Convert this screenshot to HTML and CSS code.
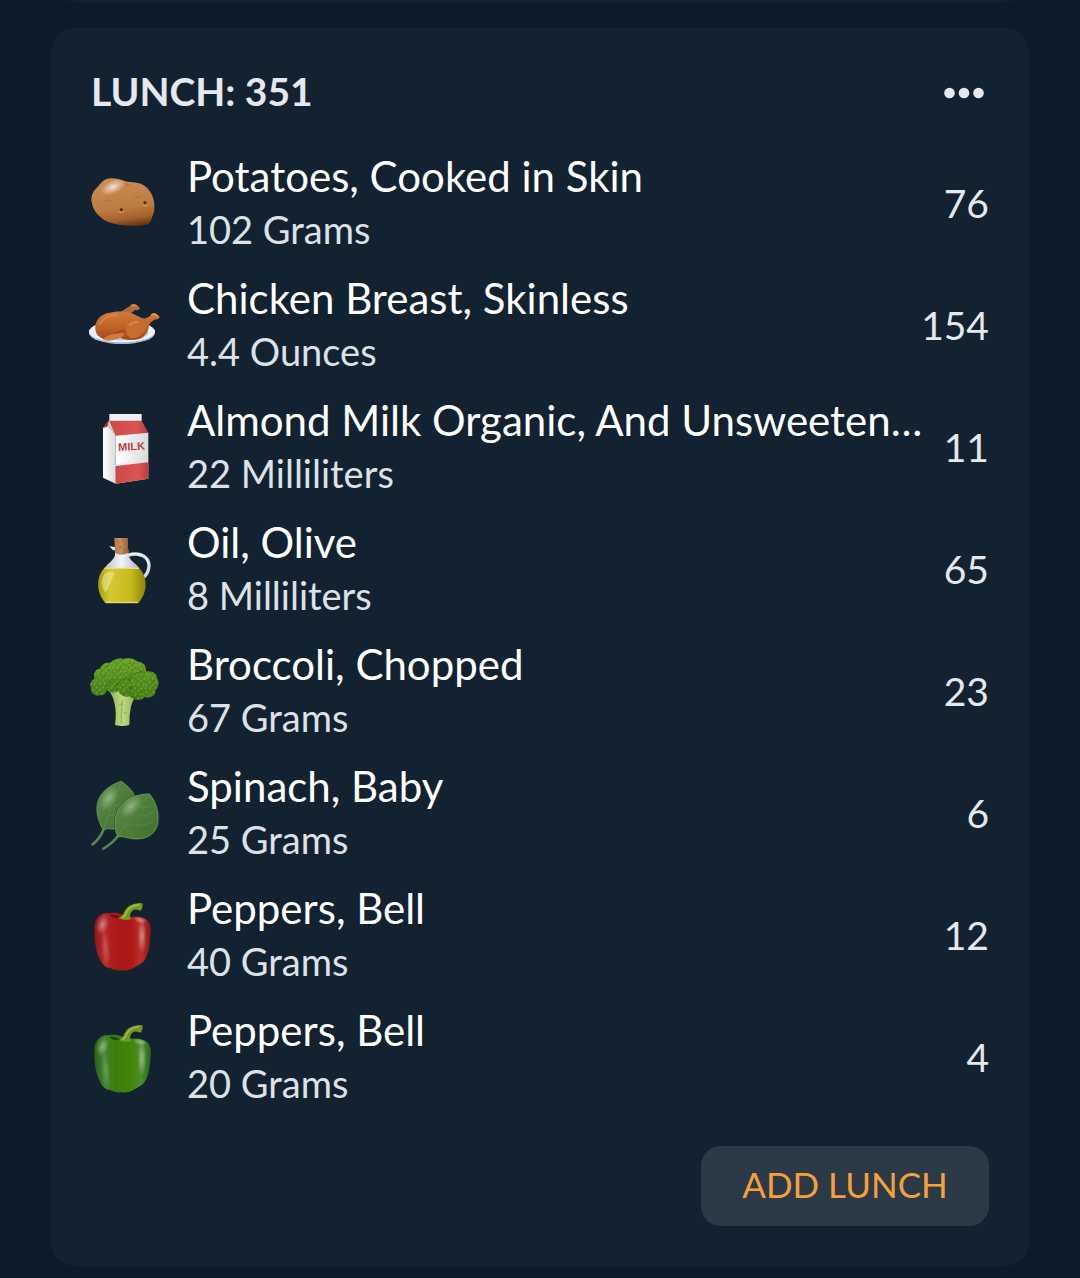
FILE: index.html
```
<!DOCTYPE html>
<html lang="en">
<head>
  <meta charset="UTF-8">
  <meta name="viewport" content="width=device-width, initial-scale=1">
  <title>Lunch</title>
  <link rel="stylesheet" href="styles.css">
</head>
<body>

  <main class="day">
    <div class="card card-prev"></div>

    <section class="card">
      <header class="meal-header">
        <h2>LUNCH: 351</h2>
        <button class="more-btn" type="button" aria-label="More options">
          <svg viewBox="0 0 40 12"><circle cx="5.5" cy="6" r="5.3"/><circle cx="20" cy="6" r="5.3"/><circle cx="34.5" cy="6" r="5.3"/></svg>
        </button>
      </header>

      <ul class="foods">
        <li class="food">
          <!-- Potato -->
          <svg class="icon" viewBox="33 6 216 216">
            <defs>
              <linearGradient id="potato" x1="0.4" y1="0" x2="0.6" y2="1"><stop offset="0" stop-color="#c98d55"/><stop offset="0.6" stop-color="#bd7d43"/><stop offset="0.85" stop-color="#a3622b"/><stop offset="1" stop-color="#6b3a14"/></linearGradient>
              <radialGradient id="shine"><stop offset="0" stop-color="#fff" stop-opacity="0.75"/><stop offset="1" stop-color="#fff" stop-opacity="0"/></radialGradient>
            </defs>
            <path d="M96 40C74 39 64 52 53 66C37 79 31 96 36 115C39 136 55 153 72 165C95 177 117 180 145 182C170 183 192 182 205 177C214 171 215 158 220 147C226 130 223 108 217 92C209 74 197 62 178 55C160 50 146 52 132 47C119 43 109 40 96 40Z" fill="url(#potato)"/>
            <ellipse cx="99" cy="66" rx="40" ry="20" transform="rotate(-25 99 66)" fill="url(#shine)"/>
            <path d="M136 56q8 8 18 4M72 108q10-4 20 2M160 98q12-4 24 0" stroke="#a66a35" stroke-width="4" fill="none" opacity="0.5"/>
            <circle cx="124" cy="134" r="5" fill="#59300f"/><circle cx="195" cy="113" r="5" fill="#59300f"/>
            <path d="M116 139q8 7 16 0M189 119q6 7 13 1" stroke="#dfaa72" stroke-width="3" fill="none"/>
          </svg>
          <div class="info">
            <p class="name">Potatoes, Cooked in Skin</p>
            <p class="amount">102 Grams</p>
          </div>
          <span class="calories">76</span>
        </li>

        <li class="food">
          <!-- Roast chicken on a plate -->
          <svg class="icon" viewBox="33 -3 216 216">
            <defs>
              <linearGradient id="roast" x1="0" y1="0" x2="0" y2="1"><stop offset="0" stop-color="#d07b3b"/><stop offset="0.5" stop-color="#c26328"/><stop offset="1" stop-color="#a34717"/></linearGradient>
            </defs>
            <ellipse cx="126" cy="129" rx="99" ry="33" fill="#a9b9cc"/>
            <ellipse cx="126" cy="125" rx="99" ry="32" fill="#eef3f8"/>
            <ellipse cx="128" cy="127" rx="78" ry="24" fill="#bccbdc"/>
            <path d="M118 68L151 47Q151 41 160 42Q171 42 173 48Q181 51 178 58Q175 62 165 60L146 76Z" fill="#b5683b"/>
            <path d="M155 48q8-6 15 2" stroke="#df9b67" stroke-width="4" fill="none"/>
            <path d="M46 118C43 94 60 74 84 69C110 62 146 62 168 76C180 82 188 86 193 86L211 78Q214 68 224 69Q230 69 231 75Q241 77 238 83Q235 89 226 88Q215 93 207 105C207 120 197 140 178 147C155 154 130 149 116 141C96 155 70 152 57 139Q47 132 46 118Z" fill="url(#roast)"/>
            <path d="M139 126C134 106 149 91 169 91C184 91 192 97 200 105C194 126 181 141 162 145C149 146 141 138 139 126Z" fill="#c66d34"/>
            <path d="M149 106Q158 94 174 97" stroke="#e7a066" stroke-width="5" fill="none" stroke-linecap="round" opacity="0.6"/>
            <path d="M59 103Q72 76 111 75" stroke="#e39856" stroke-width="7" fill="none" stroke-linecap="round" opacity="0.4"/>
            <path d="M70 148Q76 137 101 133Q116 128 132 130Q132 143 109 148Q88 155 75 151Z" fill="#cf7d3c"/>
            <path d="M104 131Q128 118 139 126" stroke="#963f13" stroke-width="3" fill="none"/>
            <path d="M214 75Q226 69 234 80" stroke="#dda06b" stroke-width="4" fill="none"/>
          </svg>
          <div class="info">
            <p class="name">Chicken Breast, Skinless</p>
            <p class="amount">4.4 Ounces</p>
          </div>
          <span class="calories">154</span>
        </li>

        <li class="food">
          <!-- Milk carton -->
          <svg class="icon" viewBox="33 33 216 216">
            <defs>
              <linearGradient id="carton" x1="0" y1="0" x2="1" y2="0"><stop offset="0" stop-color="#fff"/><stop offset="1" stop-color="#d9dadd"/></linearGradient>
              <linearGradient id="carton-red" x1="0" y1="0" x2="1" y2="0"><stop offset="0" stop-color="#cf4848"/><stop offset="0.7" stop-color="#db5553"/><stop offset="1" stop-color="#b93c3d"/></linearGradient>
            </defs>
            <path d="M88 42H185V65H88Z" fill="#eef0f1"/>
            <path d="M88 60L69 84V233L107 251V106Z" fill="url(#carton)"/>
            <path d="M88 60L69 84L82 80Z" fill="#9e292f"/>
            <path d="M88 62L107 106L83 82Z" fill="#c7c9cc"/>
            <path d="M107 106L205 97V236L107 251Z" fill="url(#carton)"/>
            <path d="M88 62H185L205 98L107 107Z" fill="url(#carton-red)"/>
            <path d="M107 198L205 187V236L107 251Z" fill="url(#carton-red)"/>
            <text class="milk-label" x="115" y="153" transform="rotate(-3 115 153)">MILK</text>
          </svg>
          <div class="info">
            <p class="name">Almond Milk Organic, And Unsweeten…</p>
            <p class="amount">22 Milliliters</p>
          </div>
          <span class="calories">11</span>
        </li>

        <li class="food">
          <!-- Olive oil bottle -->
          <svg class="icon" viewBox="33 24 216 216">
            <defs>
              <linearGradient id="oil" x1="0" y1="0" x2="1" y2="0"><stop offset="0" stop-color="#a79b0c"/><stop offset="0.25" stop-color="#d4c934"/><stop offset="0.7" stop-color="#c5b91c"/><stop offset="1" stop-color="#8c8208"/></linearGradient>
              <linearGradient id="glass" x1="0" y1="0" x2="1" y2="0"><stop offset="0" stop-color="#b9c3cc"/><stop offset="0.5" stop-color="#f4f6f7"/><stop offset="1" stop-color="#a8b2bb"/></linearGradient>
              <linearGradient id="cork" x1="0" y1="0" x2="1" y2="0"><stop offset="0" stop-color="#b97b49"/><stop offset="0.5" stop-color="#c88d5a"/><stop offset="1" stop-color="#9a5e32"/></linearGradient>
            </defs>
            <path d="M143 91C180 79 207 96 207 122Q206 142 194 154" stroke="#d6dee6" stroke-width="10" fill="none" stroke-linecap="round"/>
            <path d="M147 88C178 80 202 94 205 118" stroke="#fff" stroke-width="3" fill="none"/>
            <path d="M88 64L106 66V76H99Z" fill="#e2e8ed"/>
            <path d="M105 73H145V91Q148 104 169 119L178 130H73L84 117Q102 103 105 91Z" fill="url(#glass)"/>
            <path d="M73 129H177C204 154 204 203 174 235H77C47 203 48 154 73 129Z" fill="url(#oil)"/>
            <path d="M73 130H177" stroke="#e6df76" stroke-width="4"/>
            <path d="M75 145Q91 138 105 144C90 167 91 187 76 202C61 183 62 162 75 145Z" fill="#f4efb0" opacity="0.5"/>
            <path d="M77 232H174" stroke="#e3dc7a" stroke-width="4"/>
            <path d="M103 39H144V84Q124 94 105 84Z" fill="url(#cork)"/>
            <path d="M112 51h4M126 47h5M118 66h5M133 74h4" stroke="#9a6136" stroke-width="4"/>
          </svg>
          <div class="info">
            <p class="name">Oil, Olive</p>
            <p class="amount">8 Milliliters</p>
          </div>
          <span class="calories">65</span>
        </li>

        <li class="food">
          <!-- Broccoli -->
          <svg class="icon" viewBox="33 30 216 216">
            <defs>
              <linearGradient id="stalk" x1="0" y1="0" x2="1" y2="0"><stop offset="0" stop-color="#8db546"/><stop offset="0.4" stop-color="#c0d888"/><stop offset="1" stop-color="#7fa438"/></linearGradient>
              <linearGradient id="floret" x1="0" y1="0" x2="0" y2="1"><stop offset="0" stop-color="#6ba32b"/><stop offset="1" stop-color="#447a16"/></linearGradient>
              <pattern id="buds" width="37" height="31" patternUnits="userSpaceOnUse" patternTransform="rotate(17)">
                <g fill="#8abc48"><circle cx="4" cy="5" r="3"/><circle cx="17" cy="3" r="2.5"/><circle cx="29" cy="9" r="3"/><circle cx="11" cy="14" r="3"/><circle cx="23" cy="19" r="2.5"/><circle cx="5" cy="24" r="2.5"/><circle cx="32" cy="26" r="3"/><circle cx="17" cy="27" r="2.5"/></g>
                <g fill="#3d7014"><circle cx="10" cy="7" r="3"/><circle cx="23" cy="6" r="3"/><circle cx="18" cy="12" r="2.5"/><circle cx="31" cy="17" r="3"/><circle cx="5" cy="17" r="2.5"/><circle cx="12" cy="22" r="3"/><circle cx="25" cy="26" r="3"/></g>
              </pattern>
            </defs>
            <path d="M89 141L124 135L140 154L150 142L183 139Q160 157 153 184Q147 211 148 240Q127 246 105 240Q110 202 104 177Q100 155 89 141Z" fill="url(#stalk)"/>
            <path d="M119 180q5-5 9 0M132 204q5-3 7 2M127 165q-3 30-3 70" stroke="#93b654" stroke-width="4" fill="none"/>
            <path d="M60 151C45 155 31 143 33 129C27 115 35 106 44 102C38 87 46 72 60 71C65 57 78 52 90 54C101 43 116 38 130 42C146 36 165 41 173 50C190 50 200 64 198 79C216 76 231 86 231 99C240 113 235 127 227 134C229 151 211 162 195 156C180 171 156 164 148 154C133 158 120 150 115 138C103 147 83 140 80 134C79 145 72 150 60 151Z" fill="url(#floret)"/>
            <path d="M60 151C45 155 31 143 33 129C27 115 35 106 44 102C38 87 46 72 60 71C65 57 78 52 90 54C101 43 116 38 130 42C146 36 165 41 173 50C190 50 200 64 198 79C216 76 231 86 231 99C240 113 235 127 227 134C229 151 211 162 195 156C180 171 156 164 148 154C133 158 120 150 115 138C103 147 83 140 80 134C79 145 72 150 60 151Z" fill="url(#buds)" opacity="0.6"/>
            <path d="M79 132Q79 113 99 105M114 137Q100 121 118 110Q135 95 153 107M145 101Q162 81 197 80M153 153Q142 135 158 124" stroke="#315d10" stroke-width="6" fill="none" opacity="0.35"/>
          </svg>
          <div class="info">
            <p class="name">Broccoli, Chopped</p>
            <p class="amount">67 Grams</p>
          </div>
          <span class="calories">23</span>
        </li>

        <li class="food">
          <!-- Spinach leaves -->
          <svg class="icon" viewBox="33 21 216 216">
            <defs>
              <linearGradient id="leaf" x1="0" y1="0" x2="1" y2="1"><stop offset="0" stop-color="#5d8b4a"/><stop offset="0.5" stop-color="#4e7d3a"/><stop offset="1" stop-color="#426e30"/></linearGradient>
              <radialGradient id="sheen"><stop offset="0" stop-color="#c8dabc" stop-opacity="0.55"/><stop offset="1" stop-color="#c8dabc" stop-opacity="0"/></radialGradient>
            </defs>
            <path d="M38 223Q59 207 70 180" stroke="#57854a" stroke-width="8" fill="none" stroke-linecap="round"/>
            <path d="M70 180C59 162 49 137 51 109C54 70 90 44 124 34C143 47 165 68 168 92C174 137 139 177 105 177C88 177 80 174 70 180Z" fill="url(#leaf)" stroke="#658f55" stroke-width="3"/>
            <path d="M70 178Q91 109 123 40M87 137Q126 139 154 113M99 108Q128 107 151 80" stroke="#6d985a" stroke-width="3" fill="none" opacity="0.4"/>
            <ellipse cx="86" cy="85" rx="23" ry="42" transform="rotate(30 86 85)" fill="url(#sheen)"/>
            <path d="M114 200C101 174 104 137 119 112C140 82 174 74 208 72C227 95 237 125 233 158C228 190 202 205 175 206C150 208 132 196 114 200Z" fill="none" stroke="#2b4a26" stroke-width="8" opacity="0.6"/>
            <path d="M70 236Q95 222 114 198" stroke="#57854a" stroke-width="8" fill="none" stroke-linecap="round"/>
            <path d="M114 200C101 174 104 137 119 112C140 82 174 74 208 72C227 95 237 125 233 158C228 190 202 205 175 206C150 208 132 196 114 200Z" fill="url(#leaf)" stroke="#6c965b" stroke-width="3"/>
            <path d="M114 198Q154 132 207 76M139 163Q181 174 224 154M158 137Q195 143 226 123M179 109Q203 116 220 105M134 169Q147 190 165 198" stroke="#6d985a" stroke-width="3" fill="none" opacity="0.4"/>
            <ellipse cx="153" cy="109" rx="23" ry="42" transform="rotate(43 153 109)" fill="url(#sheen)"/>
          </svg>
          <div class="info">
            <p class="name">Spinach, Baby</p>
            <p class="amount">25 Grams</p>
          </div>
          <span class="calories">6</span>
        </li>

        <li class="food">
          <!-- Red pepper -->
          <svg class="icon" viewBox="33 27 216 216">
            <defs>
              <linearGradient id="red-pepper" x1="0" y1="0" x2="1" y2="0"><stop offset="0" stop-color="#8d1517"/><stop offset="0.18" stop-color="#b82a2a"/><stop offset="0.36" stop-color="#aa191a"/><stop offset="0.65" stop-color="#b01717"/><stop offset="0.82" stop-color="#bb302e"/><stop offset="1" stop-color="#8d1517"/></linearGradient>
              <radialGradient id="gloss"><stop offset="0" stop-color="#fff" stop-opacity="0.42"/><stop offset="1" stop-color="#fff" stop-opacity="0"/></radialGradient>
            </defs>
            <path d="M43 116C42 89 59 67 86 70Q101 66 122 72L151 80Q178 78 196 86C213 97 215 116 211 139C209 168 206 193 192 214Q179 225 166 230Q146 244 122 241Q103 242 92 235C77 233 66 224 59 206C46 182 43 149 43 116Z" fill="url(#red-pepper)"/>
            <path d="M88 74Q98 87 122 84Q108 71 88 74Z" fill="#6e1013"/>
            <ellipse cx="67" cy="105" rx="18" ry="30" transform="rotate(18 67 105)" fill="url(#gloss)"/>
            <ellipse cx="77" cy="175" rx="14" ry="60" transform="rotate(-6 77 175)" fill="url(#gloss)" opacity="0.5"/>
            <ellipse cx="186" cy="138" rx="14" ry="54" fill="url(#gloss)"/>
            <ellipse cx="180" cy="90" rx="22" ry="10" transform="rotate(15 180 90)" fill="url(#gloss)"/>
            <path d="M115 85Q129 78 132 66Q142 42 177 39L187 40Q190 47 183 62L175 60Q158 55 151 72Q148 82 155 87Q136 94 115 85Z" fill="#719c1d"/>
            <path d="M126 84Q137 78 141 64Q149 48 178 44" stroke="#9dc03f" stroke-width="5" fill="none"/>
          </svg>
          <div class="info">
            <p class="name">Peppers, Bell</p>
            <p class="amount">40 Grams</p>
          </div>
          <span class="calories">12</span>
        </li>

        <li class="food">
          <!-- Green pepper -->
          <svg class="icon" viewBox="33 27 216 216">
            <defs>
              <linearGradient id="green-pepper" x1="0" y1="0" x2="1" y2="0"><stop offset="0" stop-color="#286116"/><stop offset="0.18" stop-color="#41832a"/><stop offset="0.36" stop-color="#3b7d0b"/><stop offset="0.65" stop-color="#438507"/><stop offset="0.82" stop-color="#4c8d2c"/><stop offset="1" stop-color="#2b6815"/></linearGradient>
            </defs>
            <path d="M43 116C42 89 59 67 86 70Q101 66 122 72L151 80Q178 78 196 86C213 97 215 116 211 139C209 168 206 193 192 214Q179 225 166 230Q146 244 122 241Q103 242 92 235C77 233 66 224 59 206C46 182 43 149 43 116Z" fill="url(#green-pepper)"/>
            <path d="M88 74Q98 87 122 84Q108 71 88 74Z" fill="#164d0d"/>
            <ellipse cx="67" cy="105" rx="18" ry="30" transform="rotate(18 67 105)" fill="url(#gloss)"/>
            <ellipse cx="77" cy="175" rx="14" ry="60" transform="rotate(-6 77 175)" fill="url(#gloss)" opacity="0.5"/>
            <ellipse cx="186" cy="138" rx="14" ry="54" fill="url(#gloss)"/>
            <ellipse cx="180" cy="90" rx="22" ry="10" transform="rotate(15 180 90)" fill="url(#gloss)"/>
            <path d="M115 85Q129 78 132 66Q142 42 177 39L187 40Q190 47 183 62L175 60Q158 55 151 72Q148 82 155 87Q136 94 115 85Z" fill="#719526"/>
            <path d="M126 84Q137 78 141 64Q149 48 178 44" stroke="#a0b44c" stroke-width="5" fill="none"/>
          </svg>
          <div class="info">
            <p class="name">Peppers, Bell</p>
            <p class="amount">20 Grams</p>
          </div>
          <span class="calories">4</span>
        </li>
      </ul>

      <button class="add-btn" type="button">ADD LUNCH</button>
    </section>
  </main>

</body>
</html>
```
FILE: styles.css
```
* {
  box-sizing: border-box;
}

body {
  margin: 0;
  background: #0d1a29;
  color: #fff;
  font-family: Avenir, Lato, sans-serif;
}

.day {
  padding: 0 51px 12px;
  overflow: hidden;
}

.card {
  display: flex;
  flex-direction: column;
  padding: 40px;
  background: #132231;
  border-radius: 24px;
}

.card-prev {
  margin-top: -78px;
  margin-bottom: 26px;
}

.meal-header {
  display: flex;
  align-items: center;
  justify-content: space-between;
  margin-bottom: 28px;
}

.meal-header h2 {
  margin: 0;
  font-size: 39px;
  line-height: 46px;
  color: #e5e8ec;
}

.more-btn {
  display: flex;
  padding: 16px 5px 12px;
  border: none;
  background: none;
  cursor: pointer;
}

.more-btn svg {
  width: 40px;
  height: 12px;
  fill: #e5e8ec;
}

.foods {
  margin: 0;
  padding: 0;
  list-style: none;
}

.food {
  display: flex;
  align-items: center;
  padding: 8px 0;
}

.icon {
  flex: none;
  width: 72px;
  height: 72px;
  margin-right: 24px;
  overflow: visible;
}

.milk-label {
  font: bold 33px "Liberation Sans", sans-serif;
  fill: #b9403f;
}

.info {
  flex: 1;
  min-width: 0;
}

.name,
.amount {
  margin: 0;
  line-height: 53px;
  white-space: nowrap;
}

.name {
  overflow: hidden;
  text-overflow: ellipsis;
  font-size: 42px;
}

.amount {
  font-size: 38px;
  color: #dde2e7;
}

.calories {
  min-width: 60px;
  text-align: right;
  font-size: 39px;
  color: #e5e8ec;
}

.add-btn {
  align-self: flex-end;
  min-width: 288px;
  height: 80px;
  margin-top: 28px;
  padding: 0 40px 4px;
  border: none;
  border-radius: 20px;
  background: #2c3947;
  color: #f5a03a;
  font-family: inherit;
  font-size: 35px;
  cursor: pointer;
}
```
